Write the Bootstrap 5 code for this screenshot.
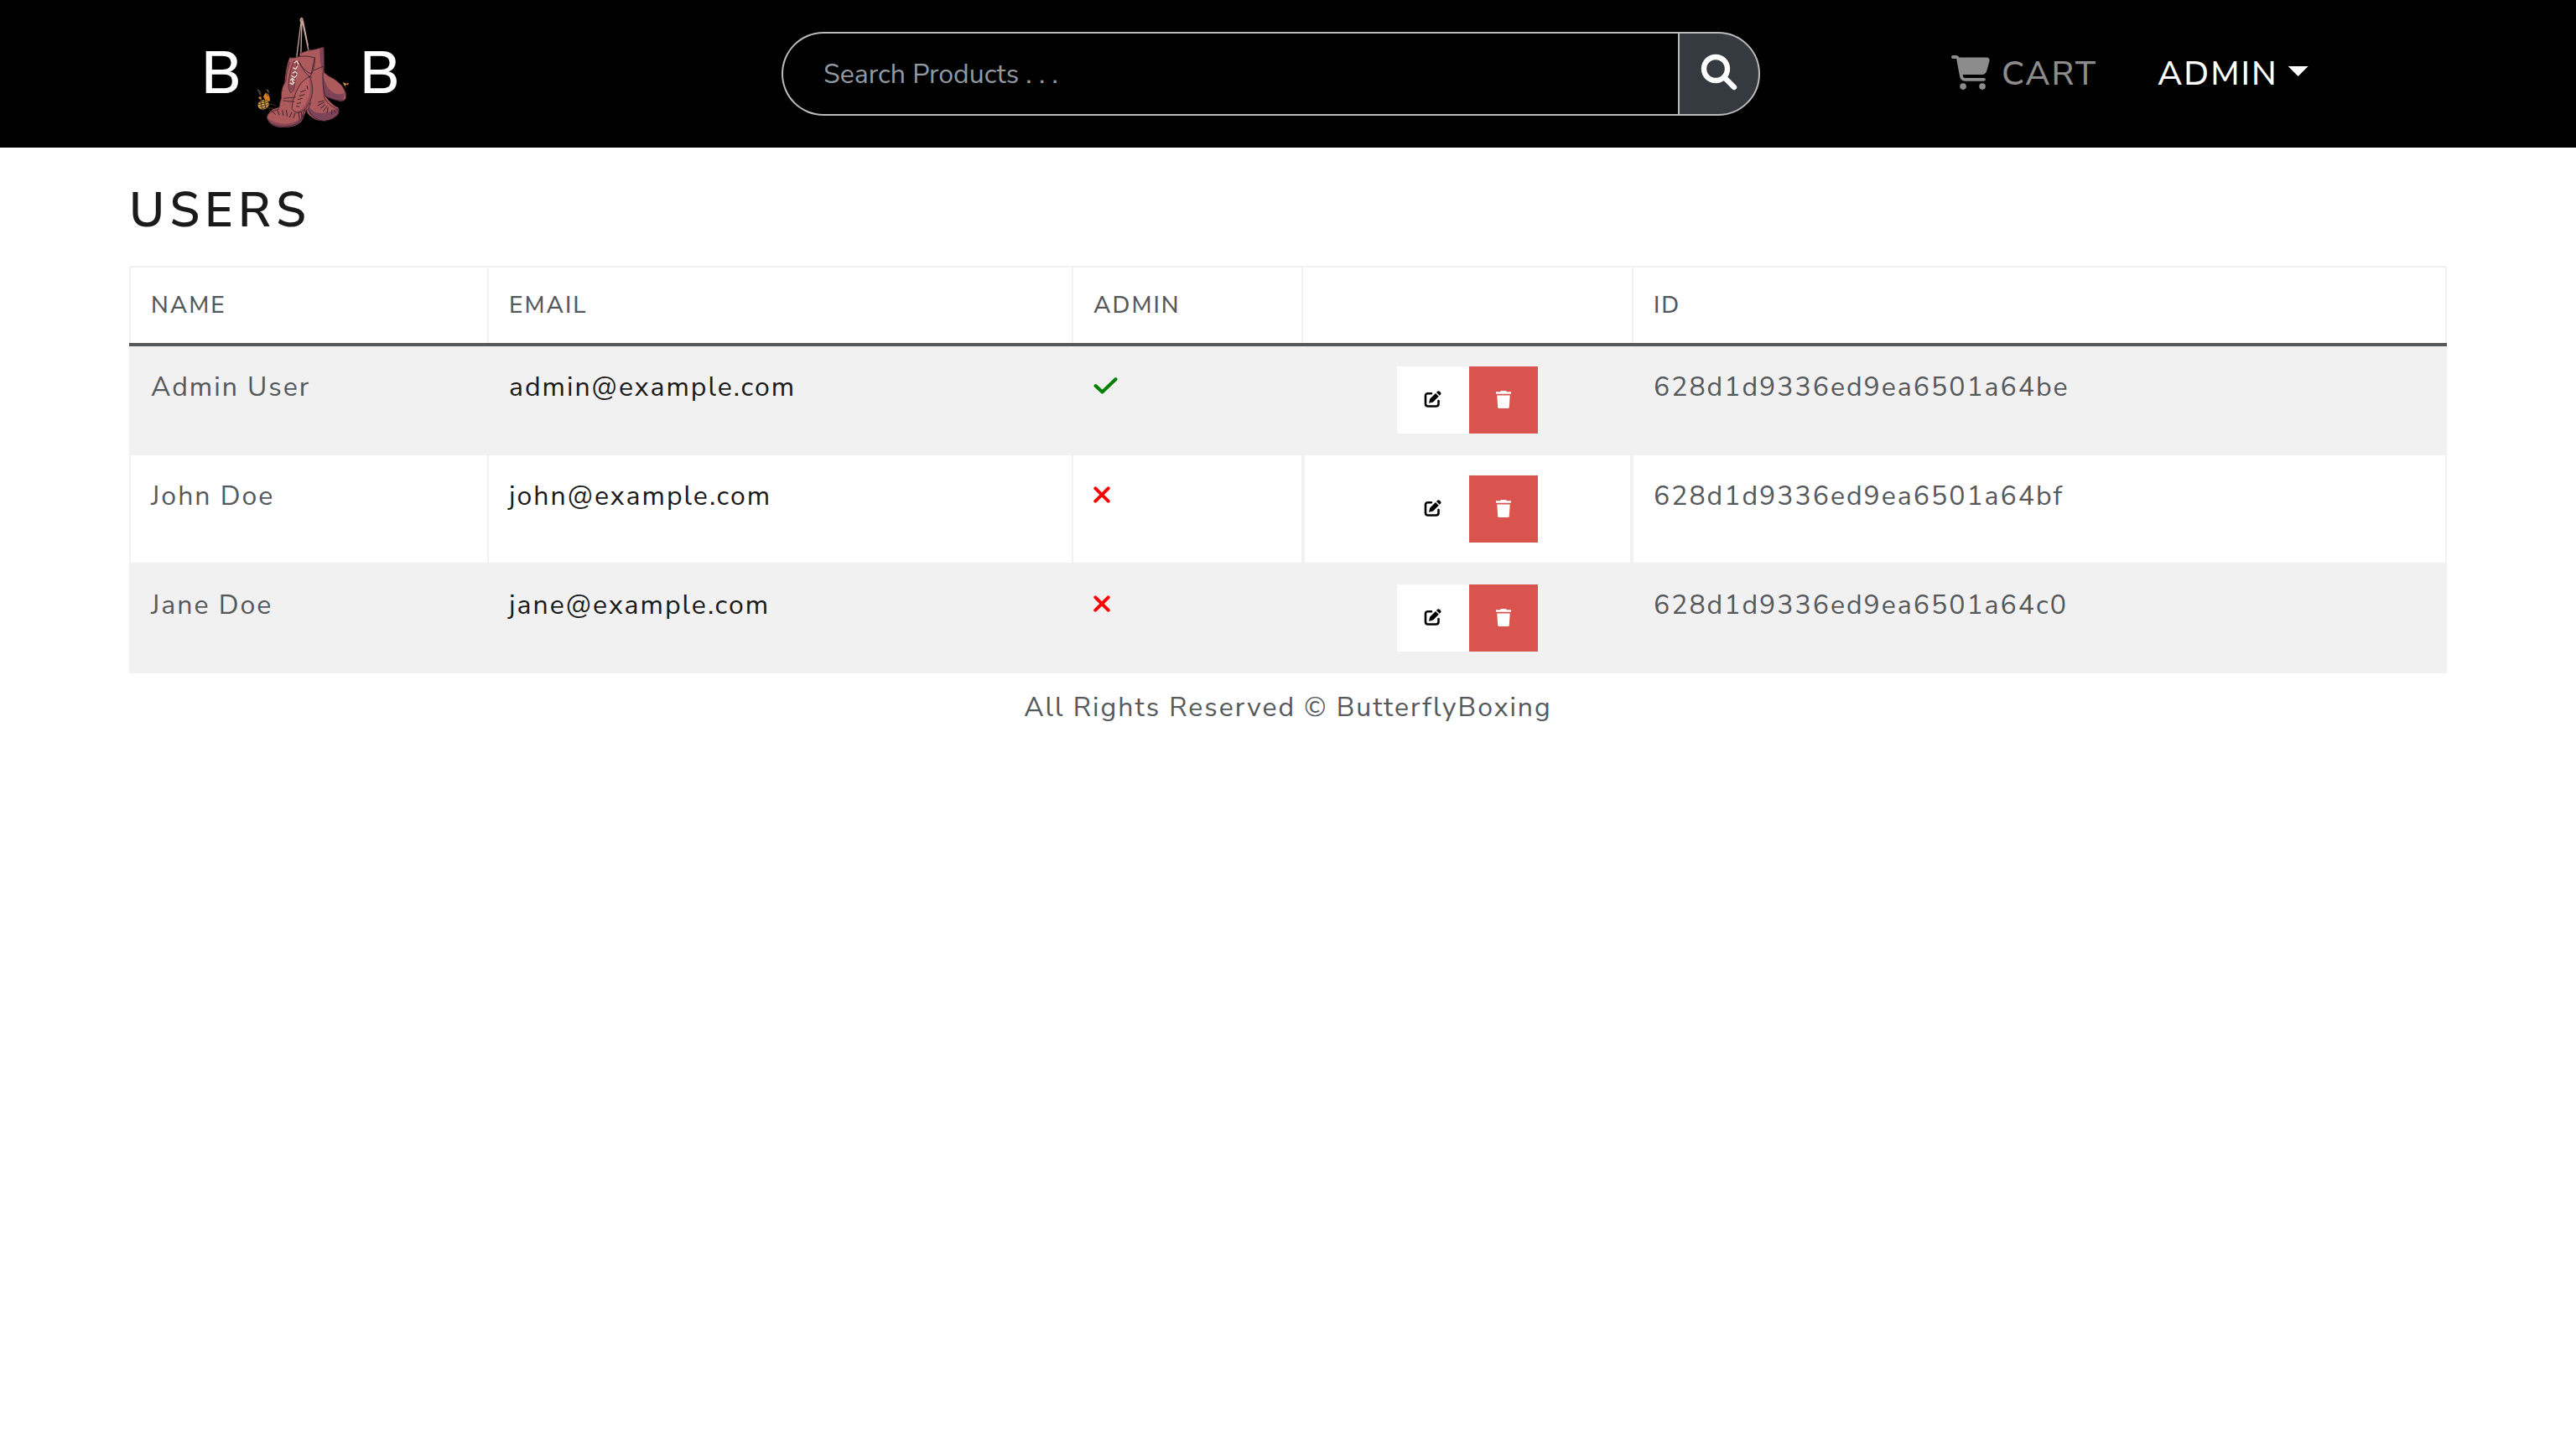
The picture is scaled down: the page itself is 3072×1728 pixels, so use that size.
<!DOCTYPE html>
<html lang="en">
<head>
<meta charset="utf-8">
<meta name="viewport" content="width=device-width, initial-scale=1">
<title>Users</title>
<link rel="stylesheet" href="https://cdn.jsdelivr.net/npm/bootstrap@5.3.0/dist/css/bootstrap.min.css">
<style>
body{font-family:"Nunito Sans",Nunito,Lato,sans-serif;font-size:32px;line-height:48px;letter-spacing:2px;color:#55595c;background:#fff}
svg{display:block;flex:none}
.topbar{height:176px;background:#000;padding:0}
.brand-link{width:448px;margin-left:240px}
.brand-letter{font-size:70.4px;line-height:100px;font-weight:600;color:#fff;letter-spacing:0;width:48px}
.brand-art{width:124px;height:144px;margin:0 5px 0 12px}
.searchbox{width:1167px;margin-left:244px;flex-wrap:nowrap}
.searchbox .form-control{height:100px;border:2px solid #bbb;border-right:0;border-radius:50px 0 0 50px;background:#000;padding:0 0 0 48px;font-size:32px;letter-spacing:0;color:#fff}
.searchbox .form-control::placeholder{color:#919aa1;opacity:1}
.searchbox .btn{flex:none;width:98px;height:100px;margin:0!important;border:2px solid #bbb;border-radius:0 50px 50px 0;background:#343a40;padding:0 0 4px}
.menu{margin-left:220px}
.menu .nav-link{font-size:40px;line-height:60px;font-weight:500;color:#fff;padding:0}
.menu .cart-link{color:#8c8c8c;width:246px}
.menu .cart-link svg{margin:0 14px 3px 0}
.caret{width:24px;height:12px;background:#fff;clip-path:polygon(0 0,100% 0,50% 100%);margin:0 0 6px 12px}
.content{padding:35px 154px 0}
.page-title{font-size:57.6px;line-height:80px;font-weight:600;color:#1a1a1a;letter-spacing:6px;margin-bottom:26px}
.users{width:2764px;table-layout:fixed;border-collapse:separate;border-spacing:0;margin-bottom:17px}
.users th,.users td{border:0 solid #f0f1f2;padding:24px;vertical-align:top}
.users th{border-bottom:4px solid #55595c;box-shadow:inset -2px 2px #f0f1f2;padding-top:26px;font-size:28px;line-height:42px;font-weight:500;height:96px}
.users th:first-child{box-shadow:inset -2px 2px #f0f1f2,inset 2px 0 #f0f1f2;padding-left:26px}
.users td{border-right-width:2px;border-bottom-width:2px;height:130px;padding-top:25px;padding-bottom:0}
.users td:first-child{border-left-width:2px}
.users td.actions{border-left-width:2px;border-right-width:4px;padding-top:24px}
.users tbody tr:nth-child(odd) td{background:#f1f1f1;border-color:#f1f1f1}
.users td a{color:#1a1a1a;text-decoration:none}
.users td>svg{margin-top:12px}
.actions .btn{height:80px;border:0;border-radius:0;padding:0}
.btn-edit{width:86px;background:#fff!important}
.btn-edit svg{margin:0 2px 1px 0}
.btn-del{width:82px;background:#d9534f!important}
.btn-del svg{margin-bottom:1px}
</style>
</head>
<body>
<header class="topbar navbar navbar-expand flex-nowrap justify-content-start">
  <a class="brand-link d-flex align-items-center text-decoration-none" href="#">
    <span class="brand-letter">B</span>
    <svg class="brand-art" viewBox="240 48 372 432">
      <g fill="none" stroke="#c9a29b" stroke-width="4"><path d="M418 72 400 214M420 72l-4 140M421 74l24 112M424 74l18 90"/><path d="M415 68l4-4 4 4v8h-8z" fill="#a86a64"/></g>
      <path d="M412 190q12-2 30-10 26-2 56-12 2 34 2 68-4 12 2 26 10 10 38 24 32 24 38 48 4 26-14 28-24 0-62-20 30 38 46 42 12 16-4 30-22 18-58 18-28-4-46-28l-20-60z" fill="#ad5a5c"/>
      <path d="M484 176l14-8 2 72-10 12q-6-40-6-76zM492 256q12 50 28 66 20 22 52 12-2 26-14 28-24-2-62-22zM444 380q20 30 56 24 40-6 50-20 8 18-16 36-20 12-48 12-26-6-42-30z" fill="#7d4459"/>
      <path d="M376 206q12 4 34-4 28-4 56 4 2 22-10 58-6 16 0 24 6 28-6 66-4 18-14 28-2 26-14 44-24 28-68 30-46 0-58-30-4-20 22-36 26-6 22-14 0-14 6-24 0-34 12-54 4-56 18-92z" fill="#ad5a5c"/>
      <path d="M296 424q40 24 76 18 36-4 58-38-4 26-18 36-20 16-56 16-46-2-60-32z" fill="#874757"/>
      <path d="M440 282q-32 38-54 104 12 20 34 14 20-6 32-46 10-42-2-72z" fill="#944b56"/>
      <path d="M446 280q-22 6-40 38-18 36-22 68 12 18 32 8 28-26 34-70z" fill="#b65f60"/>
      <path d="M376 206q12 4 34-4 28-4 56 4 2 22-10 58-26-4-48-46M412 190q12-2 30-10 26-2 56-12 2 34 2 68l-38 16M466 206l-14 66q-34 12-52 56-16 32-16 60 12 22 36 12 30-20 38-68 2-38-12-60M410 222q24 50 46 56M502 236l-6 18q-4 50 8 92M498 258q44 26 66 48 16 24 14 46-10 12-26 8-28-4-52-18M376 222q-12 34-14 68-18 24-16 62l-10 40q-38 6-42 28 8 32 62 34 60-2 78-54 12-10 18-34M354 352l44-4M352 360l42 4M442 392q20 38 58 42 46-8 52-32-2-12-18-18-24-12-36-40" fill="none" stroke="#39202c" stroke-width="2.5"/>
      <path d="M314 398l12 12M332 394l8 18M350 394l4 20M364 394l4 22M384 402l-8 18M396 404l-6 18M408 400l4 28M418 400l2 20M430 394l-12 28M414 330l20-8M410 344l20-6M406 356l16-4M402 370l14-2M400 380l12 2M438 306l4 14M478 366l22-6M476 378l24-12M486 388l18-14M496 398l14-18M510 404l4-20M526 410l2-18M540 404l-6-12" fill="none" stroke="#39202c" stroke-width="3"/>
      <path d="M392 218q-16 28-20 90 2 18 8 24 12-6 14-26 4-44 8-84z" fill="#9c4e54" stroke="#39202c" stroke-width="2"/>
      <path d="M392 226l10-8 6 12M388 242l10 6 6-12M386 262l10-6 8 8M382 270l12 8 8-10M378 288l8-8 8 8M376 296l10 6 8-8M384 282l6 18" fill="none" stroke="#ead9cf" stroke-width="4"/>
      <path d="M384 304q-8 8-6 16 6 2 10-10z" fill="#7d4459"/>
      <path d="M264 368q12-14 30-10 14 12 4 26-16 14-32 2-6-8-2-18z" fill="#dca646"/>
      <path d="M282 346q8-18 14-12 10 8 10 28-16 2-24-16zM264 350q6-8 12 0l-2 8z" fill="#d97e27"/>
      <path d="M264 366l32-6M264 374l36-8M268 382l32-8M274 390l26-8M272 358l6 32M286 354l4 34M262 322l8 18 8 8M290 330l8 14M264 326l6 8M290 322l10 2 2 10M302 374q14-2 26 4M296 386l22 2" fill="none" stroke="#43331f" stroke-width="3"/>
      <path d="M262 320l12 12M296 320l4 10M268 334l6 4" stroke="#8e7b78" stroke-width="3"/>
      <path d="M566 294l14 6-6 8z" fill="#e0a23a"/><path d="M576 300l12-2-4 6zM574 306l4 8" fill="#d8897c" stroke="#a0483c" stroke-width="2"/>
    </svg>
    <span class="brand-letter text-center">B</span>
  </a>
  <form class="searchbox input-group">
    <input class="form-control shadow-none" type="text" placeholder="Search Products . . .">
    <button class="btn d-flex align-items-center justify-content-center" type="button" aria-label="Search">
      <svg width="44" height="44" viewBox="0 0 44 44" fill="none" stroke="#fff"><circle cx="18" cy="18" r="14" stroke-width="6.4"/><path d="M29 29 40 40" stroke-width="6.4" stroke-linecap="round"/></svg>
    </button>
  </form>
  <nav class="menu navbar-nav align-items-center">
    <a class="nav-link cart-link d-flex align-items-center" href="#">
      <svg width="46" height="41" viewBox="0 0 576 512" fill="#8c8c8c"><path d="M0 24C0 10.700 10.700 0 24 0h45.500c22 0 41.500 12.800 50.600 32h411c26.300 0 45.500 25 38.600 50.400l-41 152.300c-8.500 31.400-37 53.300-69.500 53.300H170.700l5.400 28.500c2.200 11.300 12.100 19.500 23.600 19.500H488c13.300 0 24 10.700 24 24s-10.700 24-24 24H199.700c-34.600 0-64.300-24.600-70.700-58.500L77.400 54.500c-.7-3.800-4-6.500-7.900-6.500H24C10.700 48 0 37.300 0 24z"/><circle cx="176" cy="464" r="48"/><circle cx="464" cy="464" r="48"/></svg>
      CART
    </a>
    <a class="nav-link d-flex align-items-center" href="#">ADMIN<span class="caret"></span></a>
  </nav>
</header>

<main class="content">
  <h1 class="page-title">USERS</h1>
  <table class="users">
    <colgroup><col style="width:429px"><col style="width:697px"><col style="width:274px"><col style="width:394px"><col style="width:970px"></colgroup>
    <thead><tr><th>NAME</th><th>EMAIL</th><th>ADMIN</th><th></th><th>ID</th></tr></thead>
    <tbody>
      <tr>
        <td>Admin User</td><td><a href="#">admin@example.com</a></td>
        <td><svg width="30" height="20" viewBox="0 0 30 20" fill="none" stroke="green" stroke-width="4" stroke-linecap="round" stroke-linejoin="round"><path d="M2.500 10 10.500 17.500 26.500 2.200"/></svg></td>
        <td class="actions"><div class="d-flex justify-content-center"><button class="btn btn-edit d-flex align-items-center justify-content-center" aria-label="Edit"><svg width="21" height="21" viewBox="0 0 21 21"><path d="M9 3.200H5Q2 3.200 2 6v9.500q0 3 3 3h9.500q3 0 3-3V12" fill="none" stroke="#000" stroke-width="2.600" stroke-linecap="round"/><path d="M6 14.800 7.200 9.800 14 3l3.800 3.800L11 13.600zM15 2l1.200-1.200q1.300-1 2.600 0l1.200 1.200q1 1.300 0 2.600L18.800 5.800z"/></svg></button><button class="btn btn-del d-flex align-items-center justify-content-center" aria-label="Delete"><svg width="18" height="21" viewBox="0 0 18 21" fill="#fff"><path d="M6 0h6l.7 1.200H18v2.600H0V1.200h5.300zM1.300 5.400h15.400l-.9 14q-.1 1.600-1.600 1.600H3.800q-1.500 0-1.600-1.600z"/></svg></button></div></td>
        <td>628d1d9336ed9ea6501a64be</td>
      </tr>
      <tr>
        <td>John Doe</td><td><a href="#">john@example.com</a></td>
        <td><svg width="20" height="20" viewBox="0 0 20 20" stroke="red" stroke-width="4" stroke-linecap="round"><path d="M2.300 2.300 17.700 17.700M17.700 2.300 2.300 17.700"/></svg></td>
        <td class="actions"><div class="d-flex justify-content-center"><button class="btn btn-edit d-flex align-items-center justify-content-center" aria-label="Edit"><svg width="21" height="21" viewBox="0 0 21 21"><path d="M9 3.200H5Q2 3.200 2 6v9.500q0 3 3 3h9.500q3 0 3-3V12" fill="none" stroke="#000" stroke-width="2.600" stroke-linecap="round"/><path d="M6 14.800 7.200 9.800 14 3l3.800 3.800L11 13.600zM15 2l1.200-1.200q1.300-1 2.600 0l1.200 1.200q1 1.300 0 2.600L18.800 5.800z"/></svg></button><button class="btn btn-del d-flex align-items-center justify-content-center" aria-label="Delete"><svg width="18" height="21" viewBox="0 0 18 21" fill="#fff"><path d="M6 0h6l.7 1.200H18v2.600H0V1.200h5.300zM1.300 5.400h15.400l-.9 14q-.1 1.600-1.600 1.600H3.800q-1.500 0-1.600-1.600z"/></svg></button></div></td>
        <td>628d1d9336ed9ea6501a64bf</td>
      </tr>
      <tr>
        <td>Jane Doe</td><td><a href="#">jane@example.com</a></td>
        <td><svg width="20" height="20" viewBox="0 0 20 20" stroke="red" stroke-width="4" stroke-linecap="round"><path d="M2.300 2.300 17.700 17.700M17.700 2.300 2.300 17.700"/></svg></td>
        <td class="actions"><div class="d-flex justify-content-center"><button class="btn btn-edit d-flex align-items-center justify-content-center" aria-label="Edit"><svg width="21" height="21" viewBox="0 0 21 21"><path d="M9 3.200H5Q2 3.200 2 6v9.500q0 3 3 3h9.500q3 0 3-3V12" fill="none" stroke="#000" stroke-width="2.600" stroke-linecap="round"/><path d="M6 14.800 7.200 9.800 14 3l3.800 3.800L11 13.600zM15 2l1.200-1.200q1.300-1 2.600 0l1.200 1.200q1 1.300 0 2.600L18.800 5.800z"/></svg></button><button class="btn btn-del d-flex align-items-center justify-content-center" aria-label="Delete"><svg width="18" height="21" viewBox="0 0 18 21" fill="#fff"><path d="M6 0h6l.7 1.200H18v2.600H0V1.200h5.300zM1.300 5.400h15.400l-.9 14q-.1 1.600-1.600 1.600H3.800q-1.500 0-1.600-1.600z"/></svg></button></div></td>
        <td>628d1d9336ed9ea6501a64c0</td>
      </tr>
    </tbody>
  </table>
</main>
<footer class="text-center">All Rights Reserved © ButterflyBoxing</footer>
<script src="https://cdn.jsdelivr.net/npm/bootstrap@5.3.0/dist/js/bootstrap.bundle.min.js"></script>
</body>
</html>
